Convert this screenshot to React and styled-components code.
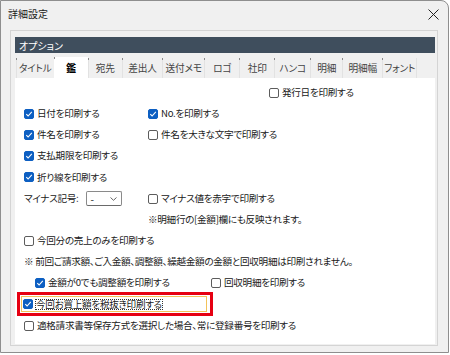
import React from "react";
import styled, { createGlobalStyle } from "styled-components";

const Global = createGlobalStyle`
  html, body { margin: 0; padding: 0; background: #ffffff; }
  body {
    font-family: "Noto Sans CJK JP", "Noto Sans", sans-serif;
    font-size: 10px;
    color: #1a1a1a;
    font-feature-settings: "palt";
  }
`;

const Window = styled.div`
  box-sizing: border-box;
  width: 449px;
  height: 353px;
  border: 1px solid #8e8e8e;
  border-radius: 0 8px 0 0;
  background: #f0f0f0;
  display: flex;
  flex-direction: column;
  overflow: hidden;
`;

const TitleBar = styled.div`
  height: 25px;
  display: flex;
  align-items: center;
  justify-content: space-between;
  padding: 0 9px 0 7px;
  font-size: 10px;
  line-height: 1;
`;

const CloseBtn = styled.span`
  display: flex;
  align-items: center;
  justify-content: center;
  width: 12px;
  height: 12px;
  margin-top: 1px;
`;

const Body = styled.div`
  flex: 1;
  padding: 4px 10px 6px 9px;
  display: flex;
`;

const Frame = styled.div`
  flex: 1;
  border: 1px solid #d4d4d4;
  padding: 6px 2px 1px 4px;
  display: flex;
  flex-direction: column;
`;

const Header = styled.div`
  height: 16px;
  background: #3f4e5d;
  color: #ffffff;
  display: flex;
  align-items: center;
  padding-left: 4px;
  font-size: 10px;
`;

const TabStrip = styled.div`
  margin-top: 5px;
  height: 20px;
  display: flex;
  align-items: stretch;
  padding-left: 1px;
`;

const Tab = styled.div`
  position: relative;
  box-sizing: border-box;
  width: ${(p) => p.$w}px;
  display: flex;
  align-items: center;
  justify-content: center;
  font-size: 9.7px;
  letter-spacing: -0.2px;
  color: ${(p) => (p.$active ? "#000" : "#444")};
  font-weight: ${(p) => (p.$active ? 700 : 400)};
  background: ${(p) => (p.$active ? "#ffffff" : "transparent")};
  margin-top: ${(p) => (p.$active ? "-1px" : "0")};
  border-left: 1px solid ${(p) => (p.$active ? "#ffffff" : "#e2e2e2")};
  &::before {
    content: "";
    position: absolute;
    left: -1px;
    top: 0;
    width: 1px;
    height: 2px;
    background: #8a8a8a;
  }
  &:last-child {
    border-right: 1px solid #e2e2e2;
  }
`;

const Panel = styled.div`
  flex: 1;
  background: #ffffff;
  padding: 4px 0 0 9px;
  display: flex;
  flex-direction: column;
`;

const Row = styled.div`
  height: 21.2px;
  display: grid;
  grid-template-columns: ${(p) => p.$cols || "124px 1fr"};
  align-items: center;
  padding-left: ${(p) => p.$indent || 0}px;
`;

const Item = styled.label`
  display: flex;
  align-items: center;
  gap: 3px;
  white-space: nowrap;
  line-height: 1;
`;

const Box = styled.span`
  box-sizing: border-box;
  width: 10px;
  height: 10px;
  border-radius: 2px;
  flex: none;
  display: flex;
  align-items: center;
  justify-content: center;
  background: ${(p) => (p.$checked ? "#0d5fc2" : "#ffffff")};
  border: 1px solid ${(p) => (p.$checked ? "#0d5fc2" : "#5c5c5c")};
`;

const Text = styled.span`
  white-space: nowrap;
  font-size: 9.6px;
  letter-spacing: -0.3px;
  line-height: 1;
  color: #202020;
`;

const Label = styled(Text)`
  margin-right: 8px;
`;

const Select = styled.span`
  box-sizing: border-box;
  width: 36px;
  height: 15px;
  border: 1px solid #8a8a8a;
  border-bottom-color: #6a6a6a;
  border-radius: 2px;
  background: #fff;
  display: flex;
  align-items: center;
  justify-content: space-between;
  padding: 0 4px 0 3px;
  font-size: 10px;
`;

const Inline = styled.div`
  display: flex;
  align-items: center;
`;

const Highlight = styled.div`
  box-sizing: border-box;
  width: 196px;
  height: 24px;
  margin: -1.4px 0 -1.4px -7px;
  border: 3px solid #e60012;
  padding: 1px 3px 1px 1px;
  display: flex;
`;

const FocusRing = styled.div`
  flex: 1;
  border: 1px solid #f3c35a;
  display: flex;
  align-items: center;
  padding-left: 1px;
  gap: 2px;
`;

const DottedText = styled(Text)`
  padding: 1px 1px;
  outline: 1px dotted #333;
  outline-offset: -1px;
`;

const Check = () => (
  <svg width="8" height="8" viewBox="0 0 8 8">
    <path d="M1.3 4.2 L3.1 6 L6.8 1.9" fill="none" stroke="#fff" strokeWidth="1.1" />
  </svg>
);

const CB = ({ checked, children }) => (
  <Item>
    <Box $checked={checked}>{checked && <Check />}</Box>
    <Text>{children}</Text>
  </Item>
);

const tabs = [
  ["タイトル", 37.6],
  ["鑑", 34, true],
  ["宛先", 34.4],
  ["差出人", 40],
  ["送付メモ", 42.3],
  ["ロゴ", 35],
  ["社印", 35],
  ["ハンコ", 36],
  ["明細", 32],
  ["明細幅", 40],
  ["フォント", 35],
];

export default function App() {
  return (
    <>
      <Global />
      <Window>
        <TitleBar>
          <span>詳細設定</span>
          <CloseBtn>
            <svg width="11" height="11" viewBox="0 0 11 11">
              <path d="M0.5 0.5 L10.5 10.5 M10.5 0.5 L0.5 10.5" stroke="#222" strokeWidth="1" />
            </svg>
          </CloseBtn>
        </TitleBar>
        <Body>
          <Frame>
            <Header>オプション</Header>
            <TabStrip>
              {tabs.map(([t, w, a]) => (
                <Tab key={t} $w={w} $active={a}>
                  {t}
                </Tab>
              ))}
            </TabStrip>
            <Panel>
              <Row $cols="245px 1fr">
                <span />
                <CB>発行日を印刷する</CB>
              </Row>
              <Row>
                <CB checked>日付を印刷する</CB>
                <CB checked>No.を印刷する</CB>
              </Row>
              <Row>
                <CB checked>件名を印刷する</CB>
                <CB>件名を大きな文字で印刷する</CB>
              </Row>
              <Row>
                <CB checked>支払期限を印刷する</CB>
              </Row>
              <Row>
                <CB checked>折り線を印刷する</CB>
              </Row>
              <Row>
                <Inline>
                  <Label>マイナス記号:</Label>
                  <Select>
                    <span>-</span>
                    <svg width="7" height="4" viewBox="0 0 7 4">
                      <path d="M0.5 0.5 L3.5 3.3 L6.5 0.5" fill="none" stroke="#555" strokeWidth="0.9" />
                    </svg>
                  </Select>
                </Inline>
                <CB>マイナス値を赤字で印刷する</CB>
              </Row>
              <Row>
                <span />
                <Text>※明細行の[金額]欄にも反映されます。</Text>
              </Row>
              <Row $cols="1fr">
                <CB>今回分の売上のみを印刷する</CB>
              </Row>
              <Row $cols="1fr">
                <Text>※ 前回ご請求額、ご入金額、調整額、繰越金額の金額と回収明細は印刷されません。</Text>
              </Row>
              <Row $cols="176px 1fr" $indent={11}>
                <CB checked>金額が0でも調整額を印刷する</CB>
                <CB>回収明細を印刷する</CB>
              </Row>
              <Row $cols="1fr">
                <Highlight>
                  <FocusRing>
                    <Box $checked>
                      <Check />
                    </Box>
                    <DottedText>今回お買上額を税抜き印刷する</DottedText>
                  </FocusRing>
                </Highlight>
              </Row>
              <Row $cols="1fr">
                <CB>適格請求書等保存方式を選択した場合、常に登録番号を印刷する</CB>
              </Row>
            </Panel>
          </Frame>
        </Body>
      </Window>
    </>
  );
}
